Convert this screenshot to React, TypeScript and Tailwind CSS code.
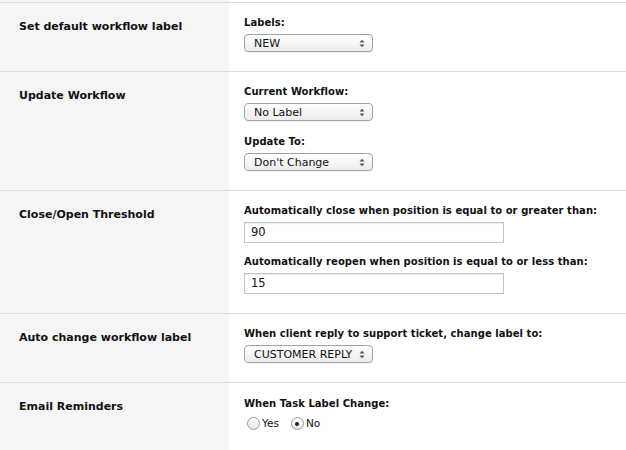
import React from "react";

const font = { fontFamily: '"DejaVu Sans", "Liberation Sans", sans-serif' };

function Select({ value }: { value: string }) {
  return (
    <div className="relative mt-[4px] flex h-[18px] w-[129px] items-center rounded-[4px] border border-[#a3a3a3] bg-gradient-to-b from-white to-[#ececec] pl-[9px] text-[11px] leading-none text-[#111] shadow-[0_1px_0_rgba(0,0,0,0.05)]">
      <span>{value}</span>
      <svg className="absolute right-[7px] top-[4px]" width="6" height="9" viewBox="0 0 6 9">
        <path d="M0.5 3.5 L3 0.8 L5.5 3.5 Z" fill="#555" />
        <path d="M0.5 5.5 L3 8.2 L5.5 5.5 Z" fill="#555" />
      </svg>
    </div>
  );
}

function Input({ value }: { value: string }) {
  return (
    <div className="mt-[4px] flex h-[21px] w-[260px] items-center border border-[#c4c4c4] bg-white pl-[6px] text-[11.5px] text-[#111] shadow-[inset_0_1px_1px_rgba(0,0,0,0.08)]">
      {value}
    </div>
  );
}

function Label({ children, gap }: { children: React.ReactNode; gap?: "sm" | "md" }) {
  const m = gap === "md" ? "mt-[14px]" : gap === "sm" ? "mt-[12px]" : "";
  return (
    <div className={`whitespace-nowrap text-[10px] font-bold leading-[14px] tracking-[0.05px] text-[#111] ${m}`}>
      {children}
    </div>
  );
}

function Radio({ checked, label }: { checked?: boolean; label: string }) {
  return (
    <div className="flex items-center">
      <div className="flex h-[13px] w-[13px] items-center justify-center rounded-full border border-[#9a9a9a] bg-gradient-to-b from-white to-[#e6e6e6]">
        {checked && <div className="h-[4px] w-[4px] rounded-full bg-[#222]" />}
      </div>
      <span className="ml-[2px] text-[10.5px] leading-none text-[#111]">{label}</span>
    </div>
  );
}

function Row({ title, children }: { title: string; children: React.ReactNode }) {
  return (
    <div className="flex border-t border-[#dcdcdc]">
      <div className="w-[229px] shrink-0 bg-[#f5f5f5] pl-[19px] pt-[17px] text-[11px] font-bold leading-[14px] text-[#111]">
        {title}
      </div>
      <div className="flex-1 bg-white pb-[19px] pl-[15px] pt-[13px]">{children}</div>
    </div>
  );
}

export default function App() {
  return (
    <div className="h-[450px] w-[626px] overflow-hidden bg-white" style={font}>
      <div className="flex h-[2px]">
        <div className="w-[229px] bg-[#f5f5f5]" />
      </div>
      <Row title="Set default workflow label">
        <Label>Labels:</Label>
        <Select value="NEW" />
      </Row>
      <Row title="Update Workflow">
        <Label>Current Workflow:</Label>
        <Select value="No Label" />
        <Label gap="md">Update To:</Label>
        <Select value="Don't Change" />
      </Row>
      <Row title="Close/Open Threshold">
        <Label>Automatically close when position is equal to or greater than:</Label>
        <Input value="90" />
        <Label gap="sm">Automatically reopen when position is equal to or less than:</Label>
        <Input value="15" />
      </Row>
      <Row title="Auto change workflow label">
        <Label>When client reply to support ticket, change label to:</Label>
        <Select value="CUSTOMER REPLY" />
      </Row>
      <div className="flex h-[100px] border-t border-[#dcdcdc]">
        <div className="w-[229px] shrink-0 bg-[#f5f5f5] pl-[19px] pt-[17px] text-[11px] font-bold leading-[14px] text-[#111]">
          Email Reminders
        </div>
        <div className="flex-1 bg-white pl-[15px] pt-[14px]">
          <Label>When Task Label Change:</Label>
          <div className="mt-[6px] flex items-center gap-[12px] pl-[3px]">
            <Radio label="Yes" />
            <Radio checked label="No" />
          </div>
        </div>
      </div>
    </div>
  );
}
